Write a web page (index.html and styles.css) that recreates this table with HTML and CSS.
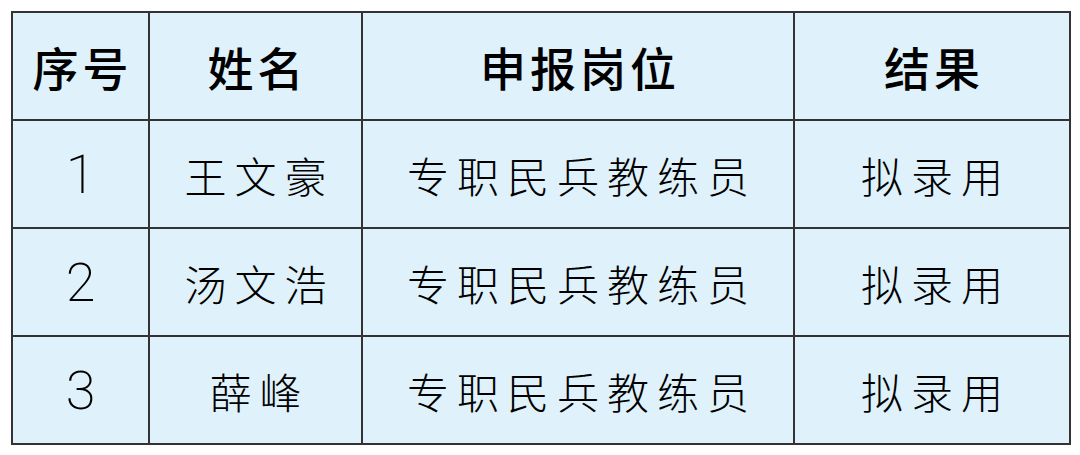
FILE: index.html
```html
<!DOCTYPE html>
<html lang="zh">
<head>
<meta charset="utf-8">
<link rel="stylesheet" href="styles.css">
</head>
<body>
<table class="tbl">
  <colgroup>
    <col class="c1"><col class="c2"><col class="c3"><col class="c4">
  </colgroup>
  <thead>
    <tr><th>序号</th><th>姓名</th><th>申报岗位</th><th>结果</th></tr>
  </thead>
  <tbody>
    <tr><td class="num">1</td><td class="kai">王文豪</td><td class="kai">专职民兵教练员</td><td class="kai">拟录用</td></tr>
    <tr><td class="num">2</td><td class="kai">汤文浩</td><td class="kai">专职民兵教练员</td><td class="kai">拟录用</td></tr>
    <tr><td class="num">3</td><td class="kai">薛峰</td><td class="kai">专职民兵教练员</td><td class="kai">拟录用</td></tr>
  </tbody>
</table>
</body>
</html>
```
FILE: styles.css
```css
html, body {
  margin: 0;
  padding: 0;
  background: #ffffff;
}
body {
  padding: 11px 0 0 11px;
}
.tbl {
  border-collapse: collapse;
  table-layout: fixed;
  width: 1058px;
  background: #dff1fa;
}
.c1 { width: 137px; }
.c2 { width: 213px; }
.c3 { width: 432px; }
.c4 { width: 276px; }
.tbl th, .tbl td {
  border: 2px solid #333333;
  height: 106px;
  padding: 0;
  text-align: center;
  vertical-align: middle;
  color: #000;
}
.tbl th {
  font-family: "Noto Sans CJK SC", sans-serif;
  font-weight: 500;
  font-size: 46px;
  letter-spacing: 4px;
  text-indent: 4px;
}
.kai {
  font-family: "Noto Sans CJK SC", sans-serif;
  font-weight: 300;
  font-size: 42px;
  letter-spacing: 8px;
  text-indent: 8px;
}
.num {
  font-family: Roboto, "Noto Sans", sans-serif;
  font-weight: 200;
  font-size: 54px;
}
```
